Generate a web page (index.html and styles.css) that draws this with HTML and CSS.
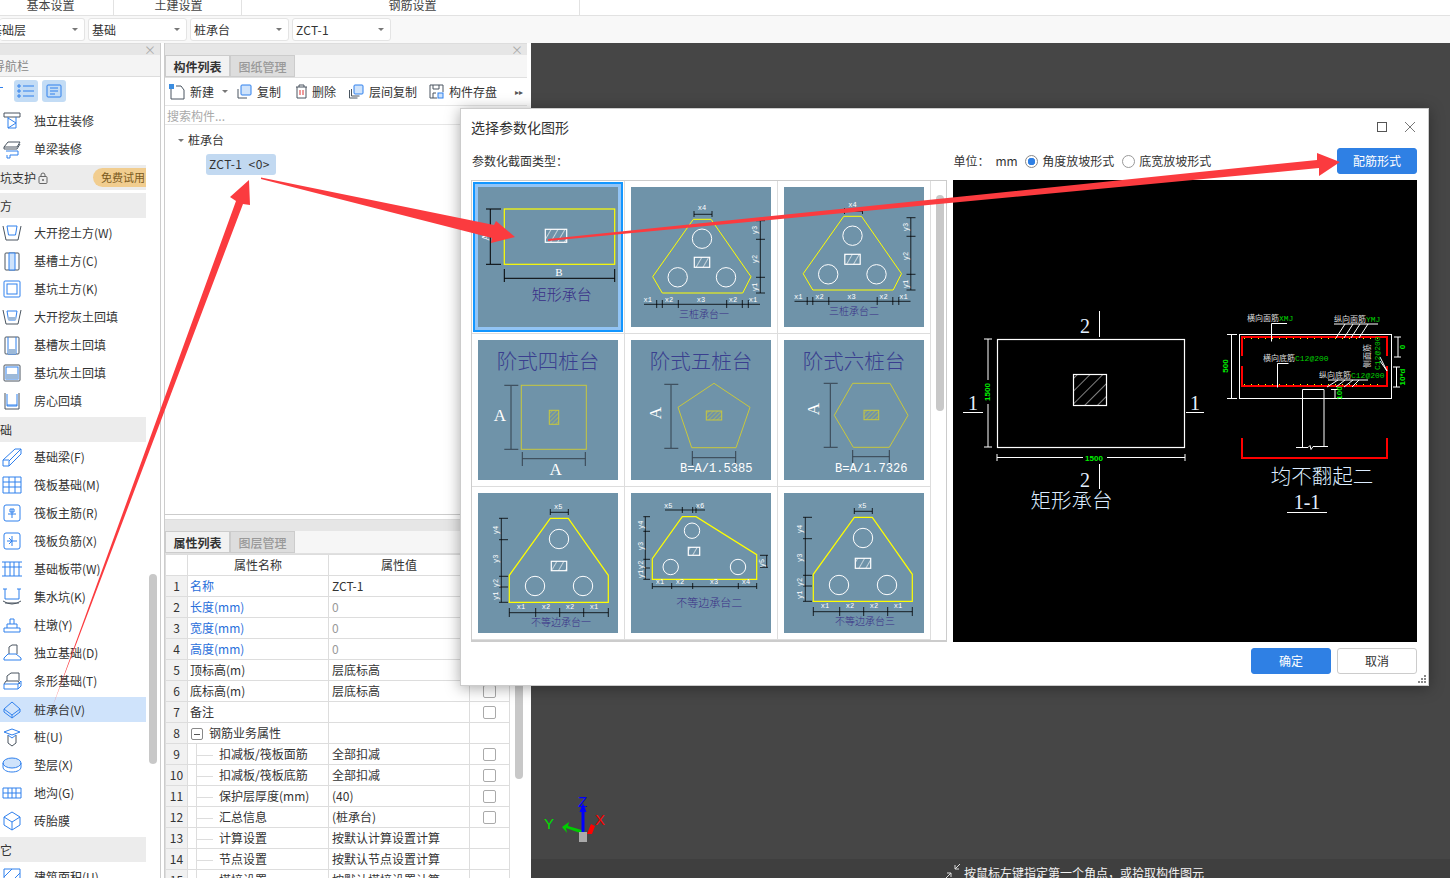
FILE: index.html
```html
<!DOCTYPE html>
<html>
<head>
    <meta charset="UTF-8">
    <title>选择参数化图形</title>
    <link rel="stylesheet" href="styles.css">
</head>
<body>
    <svg class="defs" width="0" height="0">
        <defs>
            <pattern id="hatch" width="6" height="6" patternUnits="userSpaceOnUse" patternTransform="rotate(30)">
                <line x1="0" y1="0" x2="0" y2="6" stroke="#fff" stroke-width="1.2"/>
            </pattern>
            <pattern id="hatchYellow" width="3" height="3" patternUnits="userSpaceOnUse" patternTransform="rotate(45)">
                <line x1="0" y1="0" x2="0" y2="3" stroke="#c9c83c" stroke-width="1"/>
            </pattern>
            <pattern id="hatchBig" width="9" height="9" patternUnits="userSpaceOnUse" patternTransform="rotate(45)">
                <line x1="0" y1="0" x2="0" y2="9" stroke="#fff" stroke-width="1"/>
            </pattern>
            <g id="threePile">
                <polygon class="yl" points="62.3,32.3 80,32.3 120,89.7 111.7,106 31.3,106 21.7,89.7"/>
                <circle class="wh" cx="71" cy="51.7" r="9.7"/>
                <circle class="wh" cx="46.7" cy="90.3" r="9.7"/>
                <circle class="wh" cx="95" cy="90.3" r="9.7"/>
                <rect class="hatch" x="63.3" y="70.3" width="15.4" height="10"/>
                <path class="bk" d="M63 24v6M63 27.3h18M81 24v6M129.3 33.7V106M125 33.7h9M125 52.3h9M125 90.3h9M125 106h9M13 117.3h116M25.7 113v8M31.3 113v8M47.3 113v8M95.7 113v8M111.3 113v8M117.3 113v8"/>
                <text class="lbl" x="71" y="23">x4</text>
                <text class="lbl" x="16.7" y="115">x1</text>
                <text class="lbl" x="38" y="115">x2</text>
                <text class="lbl" x="70" y="115">x3</text>
                <text class="lbl" x="102" y="115">x2</text>
                <text class="lbl" x="122" y="115">x1</text>
                <text class="lbl" transform="translate(126 43) rotate(-90)">y3</text>
                <text class="lbl" transform="translate(126 72) rotate(-90)">y2</text>
                <text class="lbl" transform="translate(126 100) rotate(-90)">y1</text>
            </g>
            <g id="unequalPile">
                <polygon class="yl2" points="72.3,25.3 90.3,25.3 130.3,82.3 130.3,109.3 31.3,109.3 31.3,82.3"/>
                <circle class="wh" cx="81" cy="46" r="9.7"/>
                <circle class="wh" cx="57" cy="93" r="9.7"/>
                <circle class="wh" cx="105" cy="93" r="9.7"/>
                <path class="bk" d="M72.3 16v6M72.3 19.3h18M90.3 16v6M23.3 25.3v84M21 25.3h9M21 46.7h9M21 83.3h9M21 94h9M21 109.3h9M31.3 119.7h99M31.3 115v9M57.7 115v9M81.7 115v9M105.7 115v9M130.3 115v9"/>
                <text class="lbl" x="80.3" y="16">x5</text>
                <text class="lbl" x="43" y="116">x1</text>
                <text class="lbl" x="68" y="116">x2</text>
                <text class="lbl" x="92" y="116">x2</text>
                <text class="lbl" x="116" y="116">x1</text>
                <text class="lbl" transform="translate(20 37) rotate(-90)">y4</text>
                <text class="lbl" transform="translate(20 65.7) rotate(-90)">y3</text>
                <text class="lbl" transform="translate(20 90) rotate(-90)">y2</text>
                <text class="lbl" transform="translate(20 102.7) rotate(-90)">y1</text>
            </g>
        </defs>
    </svg>

    <div class="topbar">
        <div class="top-tab tab-a">基本设置</div>
        <div class="top-tab tab-b">土建设置</div>
        <div class="top-tab tab-c">钢筋设置</div>
    </div>

    <div class="selectbar">
        <div class="select select-first"><span class="clip-floor">基础层</span><i class="caret"></i></div>
        <div class="select"><span>基础</span><i class="caret"></i></div>
        <div class="select"><span>桩承台</span><i class="caret"></i></div>
        <div class="select"><span class="latin">ZCT-1</span><i class="caret"></i></div>
    </div>

    <div class="main">
        <!-- left navigation -->
        <div class="nav">
            <div class="strip"><span class="strip-x">×</span></div>
            <div class="nav-title"><span>导航栏</span></div>
            <div class="nav-tools">
                <span class="tool-btn">
                    <svg width="18" height="14" viewBox="0 0 18 14"><path class="b" d="M6 2h11M6 7h11M6 12h11"/><path class="b" d="M1 1h2v2H1zM1 6h2v2H1zM1 11h2v2H1z"/></svg>
                </span>
                <span class="tool-btn">
                    <svg width="16" height="14" viewBox="0 0 16 14"><rect class="b" x="1" y="1" width="14" height="12" rx="1"/><path class="b" d="M4 4h8M4 7h8M4 10h5"/></svg>
                </span>
            </div>
            <div class="nav-body">
                <div class="nav-list">
                    <div class="nav-row"><svg class="ic" viewBox="0 0 20 20"><path d="M2 2h16v4H2z"/><path class="b" d="M6 6v11h8V6M6 7l8 5-8 5"/></svg>独立柱装修</div>
                    <div class="nav-row"><svg class="ic" viewBox="0 0 20 20"><path d="M2 8l4-5h12l-3 5H2zM2 8v2h13l3-5"/><path class="b" d="M4 12h12v4H8v3H5v-3"/></svg>单梁装修</div>
                    <div class="nav-band band-pro"><span class="clip-char">基坑支护</span>
                        <svg class="lock" width="10" height="12" viewBox="0 0 10 12"><rect x="1" y="4.5" width="8" height="7" rx="1" fill="none" stroke="#666"/><path d="M3 4.5V3a2 2 0 014 0v1.5" fill="none" stroke="#666"/><circle cx="5" cy="8" r="1" fill="#666"/></svg>
                        <span class="pill">免费试用</span>
                    </div>
                    <div class="nav-band"><span class="clip-char">土方</span></div>
                    <div class="nav-row"><svg class="ic" viewBox="0 0 20 20"><path d="M1 3l3 14h12l3-14"/><path class="b" d="M5 3l1.5 9h7L15 3M5 3h10"/></svg>大开挖土方(W)</div>
                    <div class="nav-row"><svg class="ic" viewBox="0 0 20 20"><rect x="3" y="2" width="14" height="17" rx="1"/><path class="b fill" d="M7 2h6v17H7z"/></svg>基槽土方(C)</div>
                    <div class="nav-row"><svg class="ic" viewBox="0 0 20 20"><rect class="b" x="2" y="2" width="16" height="16" rx="1"/><rect class="b" x="5" y="5" width="10" height="10"/></svg>基坑土方(K)</div>
                    <div class="nav-row"><svg class="ic" viewBox="0 0 20 20"><path d="M1 3l3 14h12l3-14"/><path class="b" d="M5 4l1.5 9h7L15 4z"/><path class="dots" d="M6 10h8v3H6z"/></svg>大开挖灰土回填</div>
                    <div class="nav-row"><svg class="ic" viewBox="0 0 20 20"><rect x="3" y="2" width="14" height="17" rx="1"/><path class="b" d="M6 2v17h8V2"/><path class="dots" d="M6 14h8v5H6z"/></svg>基槽灰土回填</div>
                    <div class="nav-row"><svg class="ic" viewBox="0 0 20 20"><rect x="2" y="2" width="16" height="16" rx="1"/><rect class="b" x="4" y="4" width="12" height="12"/><path class="dots" d="M4 11h12v5H4z"/></svg>基坑灰土回填</div>
                    <div class="nav-row"><svg class="ic" viewBox="0 0 20 20"><path d="M3 2v16h14V2"/><path class="b" d="M5 3v12h10V3"/><path class="b" d="M5 14h10" /></svg>房心回填</div>
                    <div class="nav-band"><span class="clip-char">基础</span></div>
                    <div class="nav-row"><svg class="ic" viewBox="0 0 20 20"><path class="b" d="M1 13L13 2h6L7 14v5H1zM1 13h6M19 2v5L7 19"/></svg>基础梁(F)</div>
                    <div class="nav-row"><svg class="ic" viewBox="0 0 20 20"><path class="b" d="M1 2h18v16H1zM1 7h18M1 12h18M7 2v16M13 2v16"/></svg>筏板基础(M)</div>
                    <div class="nav-row"><svg class="ic" viewBox="0 0 20 20"><rect class="b" x="2" y="2" width="16" height="16" rx="2"/><path class="b" d="M10 6v9M6 11h8M8 6h4v3H8z"/></svg>筏板主筋(R)</div>
                    <div class="nav-row"><svg class="ic" viewBox="0 0 20 20"><rect class="b" x="2" y="2" width="16" height="16" rx="2"/><path class="b" d="M5 10h10M10 5v10M7 7l3 3-3 3"/></svg>筏板负筋(X)</div>
                    <div class="nav-row"><svg class="ic" viewBox="0 0 20 20"><path class="b" d="M0 3h20M0 17h20M3 3v14M8 3v14M12 3v14M17 3v14M0 8h20"/></svg>基础板带(W)</div>
                    <div class="nav-row"><svg class="ic" viewBox="0 0 20 20"><path class="b" d="M3 2v10h14V2M1 2h4M15 2h4"/><path d="M1 14q9 6 18 0M3 16h14"/></svg>集水坑(K)</div>
                    <div class="nav-row"><svg class="ic" viewBox="0 0 20 20"><path class="b" d="M2 17v-4h16v4zM5 13V9h10v4M8 9V4h4v5"/></svg>柱墩(Y)</div>
                    <div class="nav-row"><svg class="ic" viewBox="0 0 20 20"><path d="M7 11V4l3-2h5v9"/><path class="b" d="M2 15l4-4h8l5 4v2H2z"/></svg>独立基础(D)</div>
                    <div class="nav-row"><svg class="ic" viewBox="0 0 20 20"><path d="M5 10V5l4-3h8v8M2 13l2-3h12l2 3"/><path class="b" d="M2 13h14v5H2zM16 13l3-3v5l-3 3"/></svg>条形基础(T)</div>
                    <div class="nav-row active"><svg class="ic" viewBox="0 0 20 20"><path class="b" d="M10 2l8 7-8 6-8-6zM2 9v3l8 6 8-6V9M10 15v3"/></svg>桩承台(V)</div>
                    <div class="nav-row"><svg class="ic" viewBox="0 0 20 20"><path class="b" d="M2 5l8-3 8 3-8 3z"/><path d="M6 8v8l4 3 4-3V8"/><path class="b" d="M6 8l4 3 4-3"/></svg>桩(U)</div>
                    <div class="nav-row"><svg class="ic" viewBox="0 0 20 20"><ellipse class="b fill" cx="10" cy="8" rx="9" ry="5"/><path class="b" d="M1 8v4c0 3 4 5 9 5s9-2 9-5V8"/></svg>垫层(X)</div>
                    <div class="nav-row"><svg class="ic" viewBox="0 0 20 20"><path class="b" d="M1 5h18v10H1zM1 10h18M6 5v10M10 5v10M14 5v10"/></svg>地沟(G)</div>
                    <div class="nav-row"><svg class="ic" viewBox="0 0 20 20"><path class="b" d="M10 1l8 5v8l-8 5-8-5V6zM2 6l8 5 8-5M10 11v8"/></svg>砖胎膜</div>
                    <div class="nav-band"><span class="clip-char">其它</span></div>
                    <div class="nav-row"><svg class="ic" viewBox="0 0 20 20"><path class="b" d="M2 2h16v16H2zM2 10l8-8M6 18L18 6"/></svg>建筑面积(U)</div>
                </div>
                <div class="nav-scroll"></div>
            </div>
        </div>

        <!-- component list and properties -->
        <div class="middle">
            <div class="upper">
                <div class="strip"><span class="strip-x">×</span></div>
                <div class="tabs">
                    <span class="tab on">构件列表</span>
                    <span class="tab">图纸管理</span>
                </div>
                <div class="toolbar">
                    <span class="tool tool-new">
                        <svg width="16" height="16" viewBox="0 0 16 16"><path class="g" d="M2 3v12h13V6l-3-4H7"/><rect x="0" y="0" width="5" height="5" fill="#3c8de0"/></svg>新建<i class="caret"></i>
                    </span>
                    <span class="tool tool-copy">
                        <svg width="15" height="15" viewBox="0 0 15 15"><path class="g" d="M1 5v9h9"/><rect x="4" y="1" width="10" height="10" rx="1" fill="#cfe3fb" stroke="#2f80ed"/></svg>复制
                    </span>
                    <span class="tool tool-del">
                        <svg width="13" height="15" viewBox="0 0 13 15"><path class="g" d="M1 3h11M4 3V1h5v2M2 3v11h9V3"/><path d="M5 6v5M8 6v5" stroke="#d33" fill="none"/></svg>删除
                    </span>
                    <span class="tool tool-floor">
                        <svg width="15" height="15" viewBox="0 0 15 15"><path class="g" d="M0.500 6v8h8M2.500 5v7h8"/><rect x="5" y="1" width="9" height="9" rx="1" fill="#cfe3fb" stroke="#2f80ed"/></svg>层间复制
                    </span>
                    <span class="tool tool-save">
                        <svg width="15" height="15" viewBox="0 0 15 15"><path class="g" d="M1 1h13v7M1 1v13h7M4 1v4h6V1M4 14V9h3"/><rect x="9" y="9" width="5" height="5" fill="#cfe3fb" stroke="#2f80ed"/></svg>构件存盘
                    </span>
                    <span class="more">▸▸</span>
                </div>
                <div class="search">搜索构件...</div>
                <div class="tree">
                    <div class="tree-root"><i class="caret"></i>桩承台</div>
                    <div class="tree-item">ZCT-1 &nbsp;&lt;0&gt;</div>
                </div>
            </div>

            <div class="lower">
                <div class="strip"></div>
                <div class="tabs">
                    <span class="tab on">属性列表</span>
                    <span class="tab">图层管理</span>
                </div>
                <div class="prop-body">
                    <table class="props">
                        <tr class="head"><th class="num"></th><th class="name">属性名称</th><th class="val">属性值</th><th class="chk"></th></tr>
                        <tr><td class="num">1</td><td class="name link">名称</td><td class="val">ZCT-1</td><td class="chk"></td></tr>
                        <tr><td class="num">2</td><td class="name link">长度(mm)</td><td class="val zero">0</td><td class="chk"></td></tr>
                        <tr><td class="num">3</td><td class="name link">宽度(mm)</td><td class="val zero">0</td><td class="chk"></td></tr>
                        <tr><td class="num">4</td><td class="name link">高度(mm)</td><td class="val zero">0</td><td class="chk"></td></tr>
                        <tr><td class="num">5</td><td class="name">顶标高(m)</td><td class="val">层底标高</td><td class="chk"></td></tr>
                        <tr><td class="num">6</td><td class="name">底标高(m)</td><td class="val">层底标高</td><td class="chk"><i class="box"></i></td></tr>
                        <tr><td class="num">7</td><td class="name">备注</td><td class="val"></td><td class="chk"><i class="box"></i></td></tr>
                        <tr><td class="num">8</td><td class="name"><i class="minus"></i>钢筋业务属性</td><td class="val"></td><td class="chk"></td></tr>
                        <tr><td class="num">9</td><td class="name leaf"><i class="branch"></i>扣减板/筏板面筋</td><td class="val">全部扣减</td><td class="chk"><i class="box"></i></td></tr>
                        <tr><td class="num">10</td><td class="name leaf"><i class="branch"></i>扣减板/筏板底筋</td><td class="val">全部扣减</td><td class="chk"><i class="box"></i></td></tr>
                        <tr><td class="num">11</td><td class="name leaf"><i class="branch"></i>保护层厚度(mm)</td><td class="val">(40)</td><td class="chk"><i class="box"></i></td></tr>
                        <tr><td class="num">12</td><td class="name leaf"><i class="branch"></i>汇总信息</td><td class="val">(桩承台)</td><td class="chk"><i class="box"></i></td></tr>
                        <tr><td class="num">13</td><td class="name leaf"><i class="branch"></i>计算设置</td><td class="val">按默认计算设置计算</td><td class="chk"></td></tr>
                        <tr><td class="num">14</td><td class="name leaf"><i class="branch"></i>节点设置</td><td class="val">按默认节点设置计算</td><td class="chk"></td></tr>
                        <tr><td class="num">15</td><td class="name leaf"><i class="branch"></i>搭接设置</td><td class="val">按默认搭接设置计算</td><td class="chk"></td></tr>
                    </table>
                    <div class="prop-scroll"></div>
                </div>
            </div>
        </div>

        <!-- drawing canvas -->
        <div class="canvas">
            <div class="viewport"></div>
            <div class="status">
                <svg width="16" height="16" viewBox="0 0 16 16"><path d="M15 1L10 6M10 2v4h4M1 15l5-5M2 10h4v4" fill="none" stroke="#ddd"/></svg>
                <span>按鼠标左键指定第一个角点，或拾取构件图元</span>
            </div>
            <svg class="gizmo" width="64" height="54" viewBox="0 0 64 54">
                <text x="34" y="13" class="gz" fill="#0000ff">Z</text>
                <text x="0" y="35" class="gz" fill="#00e000">Y</text>
                <text x="51" y="31" class="gz" fill="#ff0000">X</text>
                <path d="M43 40l4-10 4 2-3 8z" fill="#f00"/>
                <path d="M39 40L22 34l1 5-5-6 7-5-1 4 17 5z" fill="#0c0"/>
                <rect x="35" y="38" width="8" height="10" fill="#aaa"/>
                <path d="M37.500 38V18h-2l3.500-9 3.500 9h-2v20z" fill="#0000ff"/>
            </svg>
        </div>
    </div>

    <!-- dialog -->
    <div class="dialog">
        <div class="dlg-title">
            <span>选择参数化图形</span>
            <span class="dlg-btns">
                <svg width="10" height="10" viewBox="0 0 10 10"><rect x="0.500" y="0.500" width="9" height="9" fill="none" stroke="#555"/></svg>
                <svg width="12" height="12" viewBox="0 0 12 12"><path d="M1 1l10 10M11 1L1 11" stroke="#777" fill="none"/></svg>
            </span>
        </div>
        <div class="dlg-opts">
            <span class="opt-label">参数化截面类型：</span>
            <span class="unit">单位：</span>
            <span class="mm">mm</span>
            <span class="radio checked"></span><span class="radio-text">角度放坡形式</span>
            <span class="radio"></span><span class="radio-text last">底宽放坡形式</span>
            <span class="btn primary">配筋形式</span>
        </div>
        <div class="dlg-body">
            <div class="gallery">
                <div class="grid">
                    <div class="cell">
                        <svg class="thumb selected" viewBox="0 0 140 140">
                            <rect class="yl2" x="26.300" y="22" width="110.400" height="55.300"/>
                            <rect class="hatch" x="67.300" y="42.300" width="21.400" height="13"/>
                            <path class="bk2" d="M12.300 22v55M8 22h15M8 77.300h15M26.300 82v13M136.700 82v13M26.300 91.300h110.400"/>
                            <text class="sym" transform="translate(11 50) rotate(-90)">A</text>
                            <text class="sym" x="81" y="89">B</text>
                            <text class="cap" x="83.700" y="113" font-size="15">矩形承台</text>
                        </svg>
                    </div>
                    <div class="cell">
                        <svg class="thumb" viewBox="0 0 140 140">
                            <use href="#threePile"/>
                            <text class="cap" x="73" y="131" font-size="10">三桩承台一</text>
                        </svg>
                    </div>
                    <div class="cell">
                        <svg class="thumb" viewBox="0 0 140 140">
                            <use href="#threePile" transform="translate(-2.500 -3)"/>
                            <text class="cap" x="70" y="128" font-size="10">三桩承台二</text>
                        </svg>
                    </div>
                    <div class="cell">
                        <svg class="thumb" viewBox="0 0 140 140">
                            <text class="title" x="70" y="29">阶式四桩台</text>
                            <rect class="olive" x="43.300" y="45.300" width="65" height="64"/>
                            <rect class="olive-h" x="71.300" y="70.300" width="9.400" height="14"/>
                            <path class="dk" d="M33 46v63M26.300 45.300h14M26.300 109.300h14M44.300 118.700h63M44.300 112v14M107.300 112v14"/>
                            <text class="sym big" x="22" y="81">A</text>
                            <text class="sym big" x="77.700" y="135">A</text>
                        </svg>
                    </div>
                    <div class="cell">
                        <svg class="thumb" viewBox="0 0 140 140">
                            <text class="title" x="70" y="29">阶式五桩台</text>
                            <polygon class="olive" points="83,43.300 119,67.300 105,107.700 60.700,107.700 47,67.300"/>
                            <rect class="olive-h" x="75.300" y="71" width="15.400" height="9"/>
                            <path class="dk" d="M40 45v63M33.300 44.300h14M33.300 108.300h14M61.300 117.700h43.400M61.300 111v14M104.700 111v14"/>
                            <text class="sym big" transform="translate(30 73) rotate(-90)">A</text>
                            <text class="formula" x="49" y="132">B=A/1.5385</text>
                        </svg>
                    </div>
                    <div class="cell">
                        <svg class="thumb" viewBox="0 0 140 140">
                            <text class="title" x="70" y="29">阶式六桩台</text>
                            <polygon class="olive" points="68.700,43.300 106,43.300 124,75.300 105.300,107.300 69.300,107.300 50.300,75.300"/>
                            <rect class="olive-h" x="80" y="70.300" width="14.700" height="9.400"/>
                            <path class="dk" d="M46.300 44v63M39.700 43.300h14M39.700 107.300h14M68.700 116.700h36.600M68.700 110v13.300M105.300 110v13.300"/>
                            <text class="sym big" transform="translate(35 69) rotate(-90)">A</text>
                            <text class="formula" x="51" y="132">B=A/1.7326</text>
                        </svg>
                    </div>
                    <div class="cell">
                        <svg class="thumb" viewBox="0 0 140 140">
                            <use href="#unequalPile"/>
                            <rect class="hatch" x="73.300" y="68.300" width="15.400" height="9.400"/>
                            <text class="cap" x="83" y="133" font-size="10">不等边承台一</text>
                        </svg>
                    </div>
                    <div class="cell">
                        <svg class="thumb" viewBox="0 0 140 140">
                            <polygon class="yl2" points="51.300,23.700 65,23.700 125.700,61.700 125.700,86.300 21.300,86.300 21.300,65.700"/>
                            <circle class="wh" cx="61" cy="37.700" r="7.700"/>
                            <circle class="wh" cx="39.700" cy="74" r="7.700"/>
                            <circle class="wh" cx="107" cy="74" r="7.700"/>
                            <rect class="hatch" x="57.300" y="54.300" width="11.400" height="8"/>
                            <path class="bk" d="M34 17h40M51.300 14v6M61.700 14v6M65 14v6M14.300 23.700v62.600M12.300 23.700h6.700M12.300 38.300h6.700M12.300 66.300h6.700M12.300 75h6.700M12.300 86.300h6.700M135.700 62.300v12M129 62.300h8M129 74.300h8M21.300 93.700h104.400M21.300 90v6M40.700 90v6M61.700 90v6M107.300 90v6M125.700 90v6"/>
                            <text class="lbl" x="37.300" y="15">x5</text>
                            <text class="lbl" x="69" y="15">x6</text>
                            <text class="lbl" x="29" y="91">x1</text>
                            <text class="lbl" x="49" y="91">x2</text>
                            <text class="lbl" x="83" y="91">x3</text>
                            <text class="lbl" x="115" y="91">x4</text>
                            <text class="lbl" transform="translate(12 31.700) rotate(-90)">y4</text>
                            <text class="lbl" transform="translate(12 53) rotate(-90)">y3</text>
                            <text class="lbl" transform="translate(12 71.700) rotate(-90)">y2</text>
                            <text class="lbl" transform="translate(12 81) rotate(-90)">y1</text>
                            <text class="lbl" transform="translate(133 70) rotate(-90)">y5</text>
                            <text class="cap" x="78.300" y="114" font-size="11">不等边承台二</text>
                        </svg>
                    </div>
                    <div class="cell">
                        <svg class="thumb" viewBox="0 0 140 140">
                            <use href="#unequalPile" transform="translate(-2 -1)"/>
                            <rect class="hatch" x="71.300" y="65.300" width="15.400" height="10"/>
                            <text class="cap" x="81" y="132" font-size="10">不等边承台三</text>
                        </svg>
                    </div>
                </div>
                <div class="gallery-scroll"></div>
            </div>

            <svg class="preview" width="464" height="462" viewBox="0 0 464 462">
                <!-- plan view -->
                <rect class="cad" x="44.500" y="159.500" width="187" height="108"/>
                <rect class="cad cad-hatch" x="120.500" y="194.500" width="33" height="31"/>
                <path class="cad1" d="M35 159v108M31 159h8M31 267h8M44 277.500h188M44 274v7M232 274v7M146.500 131v26M146.500 284v25M10 232.500h20M233 232.500h18"/>
                <rect x="30" y="200" width="8" height="24" fill="#000"/>
                <rect x="130" y="273" width="24" height="8" fill="#000"/>
                <text class="dim" transform="translate(36.500 212) rotate(-90)">1500</text>
                <text class="dim" x="141" y="280.500">1500</text>
                <text class="cad-num" x="132" y="153">2</text>
                <text class="cad-num" x="132" y="307">2</text>
                <text class="cad-num" x="20" y="230">1</text>
                <text class="cad-num" x="242" y="230">1</text>
                <text class="cad-cap" x="118.500" y="328">矩形承台</text>
                <!-- section view -->
                <rect class="cad1" x="286.500" y="154.500" width="152" height="64"/>
                <path class="rebar" d="M289 176v-19h145v19M289 186v20h145v-20M289 258v20h145v-20"/>
                <path class="dotline" d="M291 158.500h140M291 204.500h140"/>
                <path class="cad1" d="M349.500 267V209.500h21.500V267M343 267.500h12l2-2 1 4 2-3h15"/>
                <path class="cad1" d="M278.500 154v64M274 154.500h10M274 218.500h10M445 157v20M441 157h7M441 177h7M443.500 187v20M440 187h7M440 207h7M382 209v10M378 209.500h8M334 143.500h-15.500v18M335.500 183.500h-11v24M381 144h44M392 144l-9 14M400 144l-9 14M407 144l-9 14M415 144l-9 14M375 200h40M385 200l-11 7M392 200l-9 7M400 200l-9 7M406 200l-7 7M427 177l7 14-7-10M334 332.500h40"/>
                <text class="note" x="294" y="141">横向面筋<tspan class="note-g">XMJ</tspan></text>
                <text class="note" x="381" y="142">纵向面筋<tspan class="note-g">YMJ</tspan></text>
                <text class="note" x="310" y="181">横向底筋<tspan class="note-g">C12@200</tspan></text>
                <text class="note" x="366" y="198">纵向底筋<tspan class="note-g">C12@200</tspan></text>
                <text class="note" transform="translate(417 188) rotate(-90)">侧面筋</text>
                <text class="note note-g" transform="translate(427 190) rotate(-90)">C12@200</text>
                <text class="dim" transform="translate(274.500 186) rotate(-90)">500</text>
                <text class="dim" transform="translate(452 167) rotate(-90)">0</text>
                <text class="dim" transform="translate(452 197) rotate(-90)">10*d</text>
                <text class="dim" transform="translate(389 213) rotate(-90)">100</text>
                <text class="cad-cap" x="369" y="304">均不翻起二</text>
                <text class="cad-num" x="354" y="329">1-1</text>
            </svg>
        </div>
        <div class="dlg-foot">
            <span class="btn primary">确定</span>
            <span class="btn">取消</span>
        </div>
        <svg class="grip" width="9" height="9" viewBox="0 0 9 9"><path d="M6 0h2v2H6zM3 3h2v2H3zM6 3h2v2H6zM0 6h2v2H0zM3 6h2v2H3zM6 6h2v2H6z" fill="#888"/></svg>
    </div>

    <!-- red annotation arrows -->
    <svg class="arrows" width="1450" height="878" viewBox="0 0 1450 878">
        <polygon points="52,708 236,201 230,197 249,180 250,205 243,204"/>
        <polygon points="261,177.500 494,225 496,221 515,237 491,243 492,238 261,179"/>
        <polygon points="548,239 1317,160 1317,153 1340,162 1319,176 1319,168 548,241"/>
    </svg>
</body>
</html>
```

FILE: styles.css
```css
* {
    box-sizing: border-box;
}

html, body {
    height: 100%;
}

body {
    margin: 0;
    width: 1450px;
    height: 878px;
    overflow: hidden;
    position: relative;
    display: flex;
    flex-direction: column;
    background: #fff;
    font-family: "Noto Sans CJK SC", "Noto Sans", sans-serif;
    font-size: 12px;
    line-height: 16px;
    color: #333;
}

i {
    font-style: normal;
}

.defs {
    position: absolute;
}

/* top tabs, only the lower half of them is in the picture */
.topbar {
    height: 16px;
    flex: none;
    display: flex;
    overflow: hidden;
    border-bottom: 1px solid #e2e2e2;
    color: #444;
}

.top-tab {
    line-height: 10px;
    text-align: center;
    border-right: 1px solid #e2e2e2;
}

.tab-a { width: 114px; padding-right: 12px; }
.tab-b { width: 128px; padding-left: 2px; }
.tab-c { width: 338px; padding-left: 4px; }

.selectbar {
    height: 27px;
    flex: none;
    display: flex;
    align-items: center;
    gap: 3px;
    background: #f8f8f8;
    overflow: hidden;
}

.select {
    width: 99px;
    height: 23px;
    padding: 0 4px 0 3px;
    display: flex;
    align-items: center;
    justify-content: space-between;
    background: #fff;
    border: 1px solid #e4e4e4;
    border-radius: 3px;
}

.select-first {
    width: 85px;
    padding-left: 0;
    overflow: hidden;
    border-left: none;
}

.clip-floor {
    margin-left: -10px;
}

.latin {
    letter-spacing: 0.3px;
}

.caret {
    display: inline-block;
    width: 0;
    height: 0;
    border: 3px solid transparent;
    border-top: 3px solid #777;
    border-bottom: none;
    margin-right: 2px;
}

.main {
    flex: 1;
    display: flex;
    min-height: 0;
}

.strip {
    height: 12px;
    flex: none;
    background: #e6e6e6;
    display: flex;
    justify-content: flex-end;
    border-top: 1px solid #ddd;
}

.strip-x {
    color: #aaa;
    font-size: 12px;
    line-height: 11px;
    padding-right: 4px;
}

/* left nav */
.nav {
    width: 161px;
    flex: none;
    border-right: 1px solid #ccc;
    display: flex;
    flex-direction: column;
    overflow: hidden;
}

.nav-title {
    height: 22px;
    flex: none;
    background: #f4f4f4;
    border-bottom: 1px solid #ddd;
    line-height: 21px;
    color: #888;
    overflow: hidden;
    font-size: 12px;
}

.nav-title span {
    margin-left: -7px;
}

.nav-tools {
    height: 30px;
    flex: none;
    display: flex;
    align-items: center;
    gap: 4px;
    padding: 0 0 2px 14px;
    background: linear-gradient(#2f80ed, #2f80ed) 0 10px/3px 1px no-repeat;
}

.tool-btn {
    width: 24px;
    height: 22px;
    display: flex;
    align-items: center;
    justify-content: center;
    background: #c3dcf5;
    border-radius: 3px;
}

.b {
    fill: none;
    stroke: #2f80ed;
    stroke-width: 1;
}

.b.fill {
    fill: #cfe3fb;
}

.g {
    fill: none;
    stroke: #4a5560;
}

.nav-body {
    flex: 1;
    display: flex;
    min-height: 0;
}

.nav-list {
    width: 146px;
    flex: none;
    display: flex;
    flex-direction: column;
}

.nav-row {
    height: 28px;
    flex: none;
    display: flex;
    align-items: center;
    gap: 12px;
    padding-left: 2px;
    white-space: nowrap;
}

.nav-row.active {
    height: 25px;
    margin: 2px 0 1px;
    background: #cfe3fb;
}

.ic {
    width: 20px;
    height: 20px;
    flex: none;
    fill: none;
    stroke: #4a5560;
    stroke-width: 1;
}

.dots {
    fill: #9db9d8;
    stroke: none;
}

.nav-band {
    height: 25px;
    flex: none;
    margin: 2px 0 1px;
    display: flex;
    align-items: center;
    background: #ececec;
    overflow: hidden;
}

.clip-char {
    margin-left: -12px;
}

.lock {
    margin-left: 2px;
}

.band-pro {
    justify-content: flex-start;
}

.pill {
    margin-left: auto;
    width: 53px;
    height: 19px;
    line-height: 19px;
    padding-left: 8px;
    font-size: 11px;
    white-space: nowrap;
    color: #7a5a20;
    background: #f1cd8f;
    border-radius: 10px 0 0 10px;
}

.nav-scroll {
    width: 8px;
    height: 190px;
    margin: 467px 0 0 3px;
    background: #c8c8c8;
    border-radius: 4px;
}

/* middle column */
.middle {
    width: 363px;
    flex: none;
    margin-left: 3px;
    border-left: 1px solid #ccc;
    display: flex;
    flex-direction: column;
}

.upper {
    height: 472px;
    flex: none;
    border-bottom: 1px solid #ccc;
}

.lower {
    flex: 1;
    margin-top: 4px;
    min-height: 0;
    overflow: hidden;
}

.tabs {
    height: 23px;
    display: flex;
    background: #f6f6f6;
    border-bottom: 1px solid #e0e0e0;
}

.tab {
    width: 65px;
    text-align: center;
    line-height: 22px;
    background: #ddd;
    border: 1px solid #ccc;
    color: #999;
    font-weight: 500;
}

.tab.on {
    background: #f2f2f2;
    color: #333;
    font-weight: 700;
}

.toolbar {
    height: 28px;
    display: flex;
    align-items: center;
    border-bottom: 1px solid #e6e6e6;
    white-space: nowrap;
}

.tool {
    display: flex;
    align-items: center;
    gap: 5px;
}

.tool-new { margin-left: 4px; width: 68px; }
.tool-new .caret { margin-left: 3px; }
.tool-copy { width: 58px; }
.tool-del { width: 54px; gap: 4px; }
.tool-floor { width: 80px; }
.tool-save { width: 86px; }

.more {
    font-size: 8px;
    color: #555;
    width: 12px;
}

.search {
    height: 19px;
    padding-left: 2px;
    line-height: 19px;
    color: #aaa;
    border-bottom: 1px solid #e6e6e6;
}

.tree {
    padding: 6px 0 0 13px;
}

.tree-root {
    height: 18px;
    line-height: 18px;
    display: flex;
    align-items: center;
    gap: 2px;
}

.tree-item {
    width: 70px;
    height: 21px;
    margin: 5px 0 0 28px;
    padding-left: 3px;
    line-height: 20px;
    letter-spacing: 0.4px;
    background: #c2d9f1;
    border-radius: 3px;
    white-space: nowrap;
}

.prop-body {
    display: flex;
}

.props {
    width: 345px;
    flex: none;
    border-collapse: collapse;
    table-layout: fixed;
}

.props th, .props td {
    height: 21px;
    padding: 0;
    border: 1px solid #ddd;
    font-weight: 400;
    white-space: nowrap;
    overflow: hidden;
}

.props th.num, .props td.num {
    width: 22px;
    text-align: center;
}

.props td.num {
    background: #f1f1f1;
}

.props .name {
    width: 141px;
    padding-left: 2px;
}

.props .val {
    width: 141px;
    padding-left: 3px;
}

.props .chk {
    text-align: center;
}

.props th.name, .props th.val {
    text-align: center;
    padding-left: 0;
}

.props .link {
    color: #2a6fdb;
}

.props .zero {
    color: #999;
}

.box {
    display: block;
    width: 13px;
    height: 13px;
    margin: 0 auto;
    border: 1px solid #aaa;
    border-radius: 2px;
}

.minus {
    display: inline-block;
    width: 12px;
    height: 12px;
    margin: 0 6px 0 1px;
    vertical-align: -2px;
    border: 1px solid #888;
    border-radius: 2px;
    background: linear-gradient(#555, #555) center/6px 1px no-repeat;
}

.props .leaf {
    background: linear-gradient(#ddd, #ddd) 8px 0/1px 100% no-repeat;
}

.branch {
    display: inline-block;
    width: 16px;
    height: 1px;
    margin: 0 6px 0 7px;
    vertical-align: middle;
    background: #ddd;
}

.prop-scroll {
    width: 8px;
    height: 140px;
    margin: 85px 0 0 5px;
    background: #c8c8c8;
    border-radius: 4px;
}

/* canvas */
.canvas {
    flex: 1;
    margin-left: 4px;
    display: flex;
    flex-direction: column;
    position: relative;
    background: #464646;
}

.viewport {
    flex: 1;
}

.status {
    height: 19px;
    flex: none;
    display: flex;
    align-items: center;
    justify-content: flex-start;
    gap: 3px;
    padding-left: 414px;
    overflow: hidden;
    background: #3f3f3f;
    color: #f2f2f2;
}

.status span {
    position: relative;
    top: 4px;
}

.status svg {
    position: relative;
    top: 2px;
}

.gizmo {
    position: absolute;
    left: 13px;
    top: 751px;
}

.gz {
    font-family: "Liberation Sans", sans-serif;
    font-size: 15px;
}

/* dialog */
.dialog {
    position: absolute;
    left: 460px;
    top: 108px;
    width: 969px;
    height: 578px;
    padding: 0 11px 0 10px;
    background: #fff;
    border: 1px solid #ccc;
    box-shadow: 0 2px 14px rgba(0, 0, 0, 0.35);
    display: flex;
    flex-direction: column;
}

.dlg-title {
    height: 39px;
    flex: none;
    padding-bottom: 4px;
    display: flex;
    align-items: center;
    justify-content: space-between;
    font-size: 14px;
}

.dlg-btns {
    display: flex;
    align-items: center;
    gap: 17px;
    margin-right: 1px;
}

.dlg-opts {
    height: 26px;
    flex: none;
    display: flex;
    align-items: center;
}

.opt-label {
    width: 483px;
    padding-left: 1px;
}

.unit {
    width: 42px;
}

.mm {
    width: 30px;
}

.radio {
    width: 13px;
    height: 13px;
    flex: none;
    border: 1px solid #999;
    border-radius: 50%;
    background: #fff;
}

.radio.checked {
    border-color: #888;
    background: radial-gradient(circle, #2f80e4 3.5px, #fff 4px);
}

.radio-text {
    width: 84px;
    padding-left: 4px;
    white-space: nowrap;
}

.radio-text.last {
    width: 202px;
}

.btn {
    width: 80px;
    height: 26px;
    flex: none;
    display: flex;
    align-items: center;
    justify-content: center;
    border: 1px solid #ccc;
    border-radius: 3px;
    background: #fff;
}

.btn.primary {
    background: #2f80e4;
    border-color: #2f80e4;
    color: #fff;
}

.dlg-body {
    height: 462px;
    margin-top: 6px;
    flex: none;
    display: flex;
    gap: 6px;
}

.gallery {
    width: 476px;
    flex: none;
    display: flex;
    border: 1px solid #ccc;
    border-bottom-width: 2px;
    overflow: hidden;
}

.grid {
    display: grid;
    grid-template-columns: repeat(3, 153px);
    grid-auto-rows: 153px;
    flex: none;
}

.cell {
    padding: 6px;
    border-right: 1px solid #ddd;
    border-bottom: 1px solid #ddd;
}

.thumb {
    display: block;
    width: 140px;
    height: 140px;
    background: #6f93a9;
}

.thumb.selected {
    box-shadow: 0 0 0 3px #92c4f5, 0 0 0 5px #1296ff;
}

.gallery-scroll {
    width: 8px;
    height: 216px;
    margin: 14px 0 0 5px;
    background: #c8c8c8;
    border-radius: 4px;
}

.yl, .yl2 {
    fill: none;
    stroke: #ff0;
    stroke-width: 1;
}

.yl2 {
    stroke-width: 1.2;
}

.wh {
    fill: none;
    stroke: #fff;
    stroke-width: 1;
}

.hatch {
    fill: url(#hatch);
    stroke: #fff;
    stroke-width: 1.2;
}

.bk {
    fill: none;
    stroke: #000;
    stroke-width: 0.8;
}

.bk2 {
    fill: none;
    stroke: #000;
    stroke-width: 1;
}

.dk {
    fill: none;
    stroke: #35424e;
    stroke-width: 1;
}

.olive {
    fill: none;
    stroke: #c9c83c;
    stroke-width: 1;
}

.olive-h {
    fill: url(#hatchYellow);
    stroke: #c9c83c;
    stroke-width: 1;
}

.lbl {
    font-family: "Liberation Mono", monospace;
    font-size: 7px;
    fill: #fff;
    text-anchor: middle;
}

.sym {
    font-family: "Liberation Serif", serif;
    font-size: 11px;
    fill: #fff;
    text-anchor: middle;
}

.sym.big {
    font-size: 17px;
}

.cap {
    fill: #3a2f87;
    text-anchor: middle;
    font-weight: 300;
}

.title {
    fill: #3a3f8f;
    font-size: 20.500px;
    font-weight: 300;
    text-anchor: middle;
}

.formula {
    font-family: "Liberation Mono", monospace;
    font-size: 12.100px;
    fill: #fff;
}

.preview {
    display: block;
    background: #000;
    flex: none;
}

.cad {
    fill: none;
    stroke: #fff;
    stroke-width: 1.2;
}

.cad-hatch {
    fill: url(#hatchBig);
}

.cad1 {
    fill: none;
    stroke: #fff;
    stroke-width: 1;
}

.rebar {
    fill: none;
    stroke: #f00;
    stroke-width: 2;
}

.dotline {
    fill: none;
    stroke: #ff0;
    stroke-width: 1;
    stroke-dasharray: 1 6;
}

.dim {
    font-family: "Liberation Sans", sans-serif;
    font-size: 8px;
    font-weight: 700;
    fill: #00ee00;
    text-anchor: middle;
}

.note {
    font-size: 8px;
    fill: #ddd;
}

.note-g {
    fill: #00d000;
    font-family: "Liberation Mono", monospace;
}

.cad-num {
    font-family: "Liberation Serif", serif;
    font-size: 20px;
    fill: #e4f0ff;
    text-anchor: middle;
}

.cad-cap {
    font-size: 20.500px;
    font-weight: 300;
    fill: #dcecff;
    text-anchor: middle;
}

.dlg-foot {
    height: 32px;
    flex: none;
    display: flex;
    justify-content: flex-end;
    align-items: flex-end;
    gap: 6px;
}

.grip {
    position: absolute;
    right: 1px;
    bottom: 1px;
}

.arrows {
    position: absolute;
    left: 0;
    top: 0;
    pointer-events: none;
}

.arrows polygon {
    fill: #fb3b3f;
}
```
